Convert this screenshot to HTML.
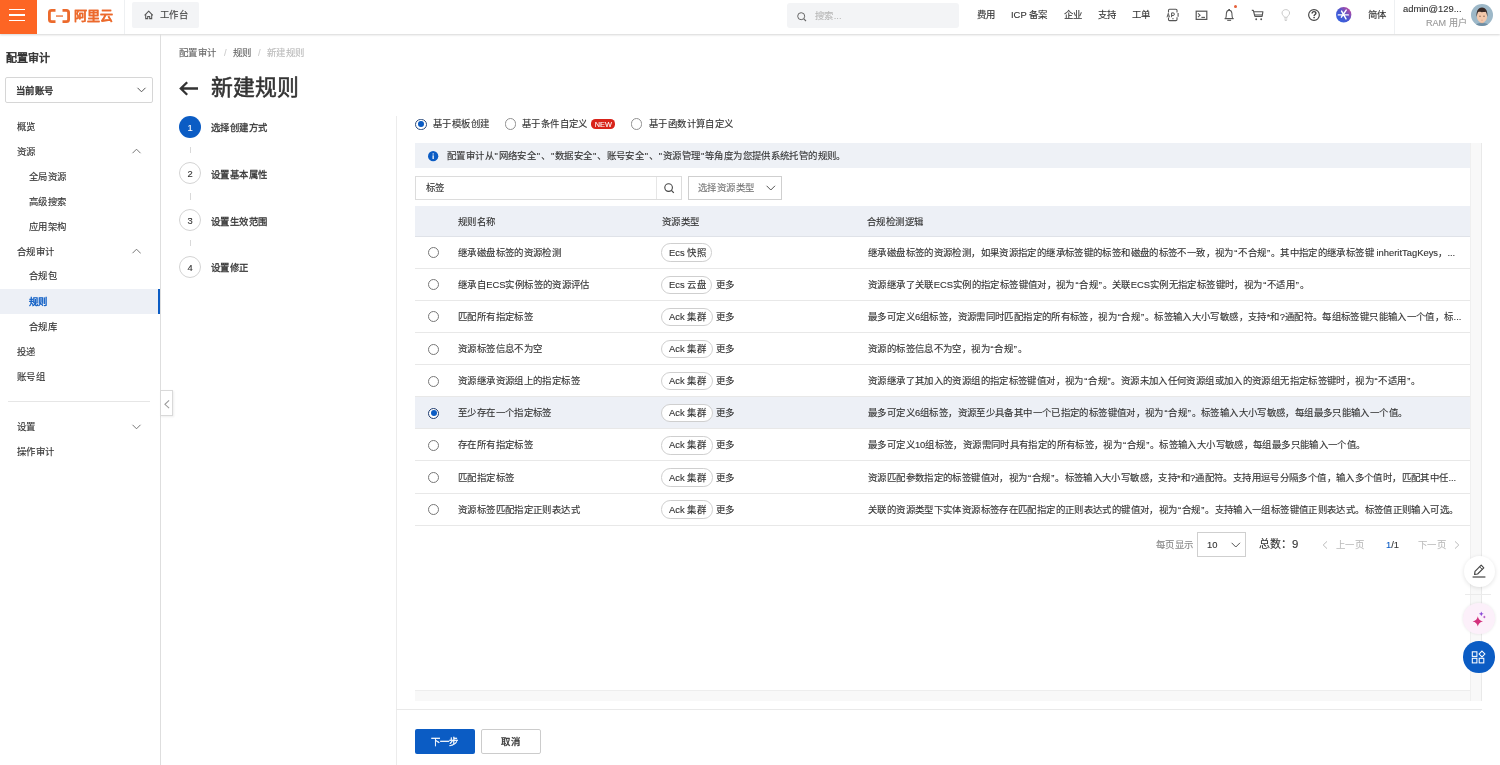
<!DOCTYPE html>
<html lang="zh-CN"><head><meta charset="utf-8">
<style>
*{box-sizing:border-box}
html,body{margin:0;padding:0;width:1500px;height:765px;overflow:hidden;background:#fff}
body{font-family:"Liberation Sans",sans-serif;font-size:9.375px;color:#333;position:relative}
#root{position:absolute;left:0;top:0;width:1500px;height:765px;will-change:transform}
.a{position:absolute}
.q{margin:0 0.9px}
.t{position:absolute;white-space:nowrap;font-size:12px;line-height:15.36px;height:15.36px;transform:scale(.78125);transform-origin:0 0;-webkit-text-stroke:0.15px}
svg{position:absolute;overflow:visible}
</style></head><body><div id="root">

<!-- ===== TOP BAR ===== -->
<div class="a" style="left:0;top:0;width:1500px;height:34px;background:#fff;box-shadow:0 1px 2px rgba(0,0,0,.16)"></div>
<div class="a" style="left:0;top:0;width:36.7px;height:33.8px;background:#fd6524"></div>
<div class="a" style="left:9.2px;top:8.5px;width:15.7px;height:1.7px;background:#fff"></div>
<div class="a" style="left:9.2px;top:14.2px;width:15.7px;height:1.7px;background:#fff"></div>
<div class="a" style="left:9.2px;top:19.5px;width:15.7px;height:1.7px;background:#fff"></div>
<!-- logo -->
<svg style="left:48px;top:9px" width="23" height="14" viewBox="0 0 23 14">
 <path d="M7.5 1.3H3.6Q1.4 1.3 1.4 3.5V10.5Q1.4 12.7 3.6 12.7H7.5" fill="none" stroke="#ec6a2c" stroke-width="2.8"/>
 <path d="M14.5 1.3H18.4Q20.6 1.3 20.6 3.5V10.5Q20.6 12.7 18.4 12.7H14.5" fill="none" stroke="#ec6a2c" stroke-width="2.8"/>
 <rect x="8" y="6.4" width="7" height="1.3" fill="#ec6a2c"/>
</svg>
<div class="t" style="left:74px;top:9.5px;font-size:16.64px;line-height:16.64px;height:16.64px;color:#ec6a2c;font-weight:bold;letter-spacing:-0.4px">阿里云</div>
<div class="a" style="left:124px;top:0;width:1px;height:34px;background:#eef0f2"></div>
<div class="a" style="left:132.2px;top:2.4px;width:66.5px;height:25.2px;background:#f3f4f6;border-radius:2px"></div>
<svg style="left:144px;top:10px" width="10" height="10" viewBox="0 0 10 10"><path d="M0.6 5.3L4.7 1.1L8.8 5.3" fill="none" stroke="#555" stroke-width="1.05" stroke-linejoin="round"/><path d="M1.7 4.3V8.6H3.7V6.4H5.7V8.6H7.7V4.3" fill="none" stroke="#555" stroke-width="1.05"/></svg>
<div class="t" style="left:159.6px;top:9px;color:#444">工作台</div>

<div class="a" style="left:787px;top:3px;width:172px;height:25px;background:#f3f4f6;border-radius:3px"></div>
<svg style="left:797px;top:11.5px" width="10" height="10" viewBox="0 0 10 10"><circle cx="4.2" cy="4.2" r="3.5" fill="none" stroke="#666" stroke-width="1"/><path d="M6.8 6.8L9 9" stroke="#666" stroke-width="1.1"/></svg>
<div class="t" style="left:815px;top:9.5px;color:#b8b8b8">搜索...</div>

<div class="t" style="left:977px;top:9px">费用</div>
<div class="t" style="left:1011px;top:9px">ICP 备案</div>
<div class="t" style="left:1063.5px;top:9px">企业</div>
<div class="t" style="left:1098px;top:9px">支持</div>
<div class="t" style="left:1132px;top:9px">工单</div>
<!-- API icon -->
<svg style="left:1166px;top:8px" width="14" height="14" viewBox="0 0 14 14">
 <path d="M2.5 4.6V2.3Q2.5 1.2 3.6 1.2H9.9Q11 1.2 11 2.3V4.4M11 9.2V11.4Q11 12.6 9.9 12.6H3.6Q2.5 12.6 2.5 11.4V9.4" fill="none" stroke="#555" stroke-width="1.1"/>
 <path d="M1 9.3L2.3 5.3L3.6 9.3M1.5 8H3.1" fill="none" stroke="#555" stroke-width="0.9"/>
 <path d="M5.6 9.2V4.9H7.1Q8.4 4.9 8.4 6.2Q8.4 7.5 7.1 7.5H5.6" fill="none" stroke="#555" stroke-width="1"/>
 <rect x="6.3" y="10.2" width="1.3" height="1" fill="#555"/>
 <path d="M12.1 5.1V8.7" stroke="#555" stroke-width="1.1"/>
</svg>
<!-- terminal -->
<svg style="left:1194.5px;top:9.5px" width="13" height="11" viewBox="0 0 13 11">
 <rect x="1.2" y="1.2" width="10.6" height="8.2" fill="none" stroke="#555" stroke-width="1.2"/>
 <path d="M3 3.3L5.1 5.2L3 7.1" fill="none" stroke="#555" stroke-width="1.05"/>
 <path d="M6.4 7.4H10" stroke="#555" stroke-width="1.1"/>
</svg>
<!-- bell -->
<svg style="left:1224px;top:8px" width="11" height="14" viewBox="0 0 11 14">
 <rect x="4.3" y="1" width="1.7" height="1.3" fill="#555"/>
 <path d="M1.6 10.5C2.4 9.4 2.2 7 2.4 5.3C2.6 3.4 3.6 2.3 5.15 2.3C6.7 2.3 7.7 3.4 7.9 5.3C8.1 7 7.9 9.4 8.7 10.5" fill="none" stroke="#555" stroke-width="1.05"/>
 <path d="M0.6 10.6H9.7" stroke="#555" stroke-width="1.2"/>
 <path d="M3.2 12.3H7.1" stroke="#555" stroke-width="1.1"/>
</svg>
<div class="a" style="left:1233.8px;top:4.7px;width:3px;height:3px;border-radius:50%;background:#e5603a"></div>
<!-- cart -->
<svg style="left:1250.5px;top:9px" width="13" height="12" viewBox="0 0 13 12">
 <path d="M0.8 1.3H2.3L3.9 7.4H11.1L11.9 2.7H3" fill="none" stroke="#555" stroke-width="1.15" stroke-linejoin="round"/>
 <path d="M3.5 5.9H11.3" stroke="#555" stroke-width="0.9"/>
 <circle cx="5.2" cy="10.2" r="0.95" fill="#555"/><circle cx="10.2" cy="10.2" r="0.95" fill="#555"/>
</svg>
<!-- bulb -->
<svg style="left:1281px;top:9px" width="10" height="12" viewBox="0 0 10 12">
 <path d="M3.3 8.3C3.3 7 1 6 1 4C1 2 2.8 0.6 4.8 0.6C6.8 0.6 8.6 2 8.6 4C8.6 6 6.3 7 6.3 8.3Z" fill="none" stroke="#c9c9c9" stroke-width="1"/>
 <path d="M3.3 10H6.3M3.8 11.4H5.8" stroke="#c9c9c9" stroke-width="1"/>
</svg>
<!-- help -->
<svg style="left:1307.5px;top:8.8px" width="12" height="12" viewBox="0 0 12 12">
 <circle cx="6" cy="6" r="5.35" fill="none" stroke="#444" stroke-width="1.15"/>
 <path d="M4.1 4.4C4.1 3.3 4.9 2.6 6 2.6C7.1 2.6 7.9 3.3 7.9 4.3C7.9 5.5 6.1 5.6 6.1 7" fill="none" stroke="#444" stroke-width="1.4"/>
 <circle cx="6.1" cy="8.5" r="0.85" fill="#444"/>
</svg>
<!-- purple ai circle -->
<svg style="left:1335.7px;top:6.5px" width="15.4" height="15.4" viewBox="0 0 16 16">
 <defs><linearGradient id="pg" x1="0.1" y1="0.9" x2="0.9" y2="0.1"><stop offset="0" stop-color="#3461e0"/><stop offset="0.5" stop-color="#4b57cf"/><stop offset="1" stop-color="#c0479d"/></linearGradient></defs>
 <circle cx="8" cy="8" r="8" fill="url(#pg)"/>
 <path d="M2.4 8.2H12.8M5.8 4.2L10.4 12.4M10.6 3.2L5.6 10.6" stroke="#fff" stroke-width="1.5" stroke-linecap="round"/>
</svg>
<div class="t" style="left:1367.5px;top:9px">简体</div>
<div class="a" style="left:1394px;top:0;width:1px;height:34px;background:#eef0f2"></div>
<div class="t" style="left:1402.5px;top:2.8px;font-size:12px;color:#333">admin@129...</div>
<div class="t" style="left:1426.3px;top:17.2px;color:#999;font-size:11.6px">RAM 用户</div>
<!-- avatar -->
<svg style="left:1471px;top:4px" width="22" height="22" viewBox="0 0 22 22">
 <defs><clipPath id="av"><circle cx="11" cy="11" r="11"/></clipPath></defs>
 <g clip-path="url(#av)">
 <rect width="22" height="22" fill="#9db8c8"/>
 <path d="M4 22.5C5 19.5 7.5 18.8 11 18.8C14.5 18.8 17 19.5 18 22.5Z" fill="#6f8ea4"/>
 <rect x="9.4" y="16.5" width="3.2" height="2.6" fill="#e3b396"/>
 <ellipse cx="11" cy="12.2" rx="5.1" ry="6.4" fill="#f3c8ab"/>
 <path d="M5.7 13C5 8 6.8 3.6 11 3.6C15.2 3.6 17 8 16.3 13C15.9 10.5 15.6 8.4 14.6 7.8C13 8.3 9 8.3 7.4 7.8C6.4 8.4 6.1 10.5 5.7 13Z" fill="#3b2a26"/>
 <ellipse cx="9" cy="12.3" rx="0.6" ry="0.7" fill="#6b4a3a"/><ellipse cx="13" cy="12.3" rx="0.6" ry="0.7" fill="#6b4a3a"/>
 <path d="M10 16.2H12" stroke="#d99a86" stroke-width="0.6"/>
 </g>
</svg>

<!-- ===== SIDEBAR ===== -->
<div class="a" style="left:160px;top:34px;width:1px;height:731px;background:#dedede"></div>
<div class="t" style="left:6px;top:53px;font-size:14px;line-height:15.36px;color:#333;-webkit-text-stroke:0.75px #333">配置审计</div>
<div class="a" style="left:5.3px;top:77.3px;width:147.3px;height:25.4px;border:1px solid #d6d6d6;border-radius:2px;background:#fff"></div>
<div class="t" style="left:16.3px;top:85.2px;color:#333;-webkit-text-stroke:0.55px #333">当前账号</div>
<svg style="left:136.5px;top:87px" width="9" height="6" viewBox="0 0 9 6"><path d="M0.5 0.8L4.5 4.8L8.5 0.8" fill="none" stroke="#555" stroke-width="1"/></svg>

<div class="t" style="left:17px;top:120.5px">概览</div>
<div class="t" style="left:16.5px;top:145.5px">资源</div>
<svg style="left:132px;top:148px" width="9" height="6" viewBox="0 0 9 6"><path d="M0.5 5.2L4.5 1.2L8.5 5.2" fill="none" stroke="#666" stroke-width="0.9"/></svg>
<div class="t" style="left:29.4px;top:170.9px">全局资源</div>
<div class="t" style="left:29.4px;top:196px">高级搜索</div>
<div class="t" style="left:29.4px;top:220.8px">应用架构</div>
<div class="t" style="left:16.5px;top:245.5px">合规审计</div>
<svg style="left:132px;top:248px" width="9" height="6" viewBox="0 0 9 6"><path d="M0.5 5.2L4.5 1.2L8.5 5.2" fill="none" stroke="#666" stroke-width="0.9"/></svg>
<div class="t" style="left:29.4px;top:270.3px">合规包</div>
<div class="a" style="left:0;top:289.2px;width:160px;height:24.6px;background:#edf0f6"></div>
<div class="a" style="left:158px;top:289.2px;width:2px;height:24.6px;background:#0b5cc4"></div>
<div class="t" style="left:29.4px;top:295.5px;color:#0b5cc4;-webkit-text-stroke:0.55px #0b5cc4">规则</div>
<div class="t" style="left:29.4px;top:321px">合规库</div>
<div class="t" style="left:16.5px;top:346px">投递</div>
<div class="t" style="left:16.5px;top:371px">账号组</div>
<div class="a" style="left:8px;top:401px;width:142px;height:1px;background:#e6e6e6"></div>
<div class="t" style="left:16.5px;top:420.7px">设置</div>
<svg style="left:132px;top:423.5px" width="9" height="6" viewBox="0 0 9 6"><path d="M0.5 0.8L4.5 4.8L8.5 0.8" fill="none" stroke="#666" stroke-width="0.9"/></svg>
<div class="t" style="left:16.5px;top:445.6px">操作审计</div>
<!-- collapse tab -->
<div class="a" style="left:160px;top:390.3px;width:12.6px;height:26.2px;background:#fff;border:1px solid #d9d9d9;box-shadow:1px 1px 2px rgba(0,0,0,.07)"></div>
<svg style="left:163.5px;top:399.8px" width="6" height="9" viewBox="0 0 6 9"><path d="M5.1 0.4L0.9 4.3L5.1 8.2" fill="none" stroke="#999" stroke-width="1.05"/></svg>

<!-- ===== MAIN HEADER ===== -->
<div class="t" style="left:179.4px;top:47.3px;color:#666">配置审计</div>
<div class="t" style="left:223.5px;top:47.3px;color:#ccc">/</div>
<div class="t" style="left:232.7px;top:47.3px;color:#666">规则</div>
<div class="t" style="left:257.7px;top:47.3px;color:#ccc">/</div>
<div class="t" style="left:266.9px;top:47.3px;color:#bbb">新建规则</div>
<svg style="left:179px;top:81px" width="20" height="15" viewBox="0 0 20 15"><path d="M19 7.5H2.2M8.2 1.2L1.8 7.5L8.2 13.8" fill="none" stroke="#333" stroke-width="2.3"/></svg>
<div class="t" style="left:210.5px;top:76px;font-size:28px;line-height:30.72px;height:30.72px;color:#333;-webkit-text-stroke:0.7px #333">新建规则</div>

<!-- steps -->
<div class="a" style="left:179.2px;top:115.7px;width:22px;height:22px;border-radius:50%;background:#0b5cc4"></div>
<div class="t" style="left:179.2px;top:121.50px;width:28.16px;text-align:center;color:#fff">1</div>
<div class="a" style="left:179.2px;top:162.3px;width:22px;height:22px;border-radius:50%;border:1px solid #d3d3d3"></div>
<div class="t" style="left:179.2px;top:168.10px;width:28.16px;text-align:center;color:#333">2</div>
<div class="a" style="left:179.2px;top:209px;width:22px;height:22px;border-radius:50%;border:1px solid #d3d3d3"></div>
<div class="t" style="left:179.2px;top:214.80px;width:28.16px;text-align:center;color:#333">3</div>
<div class="a" style="left:179.2px;top:255.7px;width:22px;height:22px;border-radius:50%;border:1px solid #d3d3d3"></div>
<div class="t" style="left:179.2px;top:261.50px;width:28.16px;text-align:center;color:#333">4</div>
<div class="a" style="left:190px;top:146.6px;width:1px;height:6.3px;background:#d9d9d9"></div>
<div class="a" style="left:190px;top:193.3px;width:1px;height:6.3px;background:#d9d9d9"></div>
<div class="a" style="left:190px;top:240px;width:1px;height:6.3px;background:#d9d9d9"></div>
<div class="t" style="left:210.8px;top:122.3px;-webkit-text-stroke:0.35px #333">选择创建方式</div>
<div class="t" style="left:210.8px;top:168.8px;-webkit-text-stroke:0.35px #333">设置基本属性</div>
<div class="t" style="left:210.8px;top:215.5px;-webkit-text-stroke:0.35px #333">设置生效范围</div>
<div class="t" style="left:210.8px;top:262.2px;-webkit-text-stroke:0.35px #333">设置修正</div>

<div class="a" style="left:395.6px;top:115.7px;width:1px;height:650px;background:#ececec"></div>

<!-- ===== CONTENT ===== -->

<!-- radios -->
<div class="a" style="left:415px;top:118.5px;width:11.6px;height:11.6px;border-radius:50%;border:1px solid #2b4a7a;background:#fff"></div>
<div class="a" style="left:417.9px;top:121.4px;width:5.8px;height:5.8px;border-radius:50%;background:#0b5cc4"></div>
<div class="t" style="left:432.7px;top:118.3px">基于模板创建</div>
<div class="a" style="left:504.5px;top:118.4px;width:11.6px;height:11.6px;border-radius:50%;border:1px solid #8f8f8f;background:#fff"></div>
<div class="t" style="left:521.7px;top:118.3px">基于条件自定义</div>
<div class="a" style="left:590.7px;top:118.6px;width:24.6px;height:10.9px;border-radius:4.5px;background:#d8231a"></div><div class="t" style="left:590.7px;top:118.6px;width:31.5px;height:14px;line-height:14.4px;text-align:center;color:#fff;font-size:9.4px;-webkit-text-stroke:0.1px #fff">NEW</div>
<div class="a" style="left:630.7px;top:118.4px;width:11.6px;height:11.6px;border-radius:50%;border:1px solid #8f8f8f;background:#fff"></div>
<div class="t" style="left:648.6px;top:118.3px">基于函数计算自定义</div>

<!-- scroll container tracks -->
<div class="a" style="left:1470px;top:142.5px;width:11.8px;height:558.3px;background:#f8f8f8;border-left:1px solid #efefef;border-right:1px solid #e9e9e9"></div>
<div class="a" style="left:415px;top:690px;width:1055px;height:10.8px;background:#f8f8f8;border-top:1px solid #ededed"></div>

<!-- info bar -->
<div class="a" style="left:415px;top:143px;width:1055px;height:25px;background:#eef1f6"></div>
<svg style="left:428px;top:150.9px" width="10.3" height="10.3" viewBox="0 0 10 10"><circle cx="5" cy="5" r="5" fill="#0b5cc4"/><rect x="4.4" y="4.2" width="1.2" height="3.6" fill="#fff"/><circle cx="5" cy="2.8" r="0.7" fill="#fff"/></svg>
<div class="t" style="left:446.5px;top:150px">配置审计从<span class="q">"</span>网络安全<span class="q">"</span>、<span class="q">"</span>数据安全<span class="q">"</span>、账号安全<span class="q">"</span>、<span class="q">"</span>资源管理<span class="q">"</span>等角度为您提供系统托管的规则。</div>

<!-- search -->
<div class="a" style="left:415px;top:175.5px;width:266.6px;height:24.2px;border:1px solid #dcdcdc;background:#fff"></div>
<div class="a" style="left:656px;top:176.5px;width:1px;height:22.2px;background:#e6e6e6"></div>
<div class="t" style="left:425.9px;top:181.5px">标签</div>
<svg style="left:663.8px;top:182.5px" width="11" height="11" viewBox="0 0 11 11"><circle cx="4.6" cy="4.6" r="3.8" fill="none" stroke="#444" stroke-width="1.1"/><path d="M7.4 7.4L9.8 9.8" stroke="#444" stroke-width="1.2"/></svg>
<div class="a" style="left:688.2px;top:175.5px;width:94.3px;height:24.2px;border:1px solid #cfcfcf;background:#fff"></div>
<div class="t" style="left:698px;top:181.5px;color:#777">选择资源类型</div>
<svg style="left:766px;top:184.5px" width="10" height="6" viewBox="0 0 10 6"><path d="M0.6 0.8L4.8 5L9 0.8" fill="none" stroke="#555" stroke-width="1"/></svg>

<!-- table header -->
<div class="a" style="left:415px;top:205.8px;width:1055px;height:31px;background:#edf0f6;border-bottom:1px solid #dfe2e8"></div>
<div class="t" style="left:457.7px;top:215.5px">规则名称</div>
<div class="t" style="left:661.7px;top:215.5px">资源类型</div>
<div class="t" style="left:867px;top:215.5px">合规检测逻辑</div>

<div class="a" style="left:415px;top:267.72px;width:1055px;height:1px;background:#e8e8e8"></div>
<div class="a" style="left:428px;top:247.16px;width:11px;height:11px;border-radius:50%;border:1px solid #777;background:#fff"></div>
<div class="t" style="left:457.7px;top:246.66px">继承磁盘标签的资源检测</div>
<div class="a" style="left:661.4px;top:243.46px;width:50.6px;height:18.4px;border:1px solid #cfcfcf;border-radius:9.2px;background:#fff"></div>
<div class="t" style="left:668.8px;top:246.66px">Ecs 快照</div>
<div class="t" style="left:867.6px;top:246.66px">继承磁盘标签的资源检测，如果资源指定的继承标签键的标签和磁盘的标签不一致，视为<span class="q">“</span>不合规<span class="q">”</span>。其中指定的继承标签键 inheritTagKeys，...</div>
<div class="a" style="left:415px;top:299.84px;width:1055px;height:1px;background:#e8e8e8"></div>
<div class="a" style="left:428px;top:279.28px;width:11px;height:11px;border-radius:50%;border:1px solid #777;background:#fff"></div>
<div class="t" style="left:457.7px;top:278.78px">继承自ECS实例标签的资源评估</div>
<div class="a" style="left:661.4px;top:275.58px;width:50.6px;height:18.4px;border:1px solid #cfcfcf;border-radius:9.2px;background:#fff"></div>
<div class="t" style="left:668.8px;top:278.78px">Ecs 云盘</div>
<div class="t" style="left:716.3px;top:278.78px">更多</div>
<div class="t" style="left:867.6px;top:278.78px">资源继承了关联ECS实例的指定标签键值对，视为<span class="q">“</span>合规<span class="q">”</span>。关联ECS实例无指定标签键时，视为<span class="q">“</span>不适用<span class="q">”</span>。</div>
<div class="a" style="left:415px;top:331.96px;width:1055px;height:1px;background:#e8e8e8"></div>
<div class="a" style="left:428px;top:311.40px;width:11px;height:11px;border-radius:50%;border:1px solid #777;background:#fff"></div>
<div class="t" style="left:457.7px;top:310.90px">匹配所有指定标签</div>
<div class="a" style="left:661.4px;top:307.70px;width:52px;height:18.4px;border:1px solid #cfcfcf;border-radius:9.2px;background:#fff"></div>
<div class="t" style="left:668.8px;top:310.90px">Ack 集群</div>
<div class="t" style="left:716.3px;top:310.90px">更多</div>
<div class="t" style="left:867.6px;top:310.90px">最多可定义6组标签，资源需同时匹配指定的所有标签，视为<span class="q">“</span>合规<span class="q">”</span>。标签输入大小写敏感，支持*和?通配符。每组标签键只能输入一个值，标...</div>
<div class="a" style="left:415px;top:364.08px;width:1055px;height:1px;background:#e8e8e8"></div>
<div class="a" style="left:428px;top:343.52px;width:11px;height:11px;border-radius:50%;border:1px solid #777;background:#fff"></div>
<div class="t" style="left:457.7px;top:343.02px">资源标签信息不为空</div>
<div class="a" style="left:661.4px;top:339.82px;width:52px;height:18.4px;border:1px solid #cfcfcf;border-radius:9.2px;background:#fff"></div>
<div class="t" style="left:668.8px;top:343.02px">Ack 集群</div>
<div class="t" style="left:716.3px;top:343.02px">更多</div>
<div class="t" style="left:867.6px;top:343.02px">资源的标签信息不为空，视为<span class="q">“</span>合规<span class="q">”</span>。</div>
<div class="a" style="left:415px;top:396.20px;width:1055px;height:1px;background:#e8e8e8"></div>
<div class="a" style="left:428px;top:375.64px;width:11px;height:11px;border-radius:50%;border:1px solid #777;background:#fff"></div>
<div class="t" style="left:457.7px;top:375.14px">资源继承资源组上的指定标签</div>
<div class="a" style="left:661.4px;top:371.94px;width:52px;height:18.4px;border:1px solid #cfcfcf;border-radius:9.2px;background:#fff"></div>
<div class="t" style="left:668.8px;top:375.14px">Ack 集群</div>
<div class="t" style="left:716.3px;top:375.14px">更多</div>
<div class="t" style="left:867.6px;top:375.14px">资源继承了其加入的资源组的指定标签键值对，视为<span class="q">“</span>合规<span class="q">”</span>。资源未加入任何资源组或加入的资源组无指定标签键时，视为<span class="q">“</span>不适用<span class="q">”</span>。</div>
<div class="a" style="left:415px;top:396.80px;width:1055px;height:32.52px;background:#edf0f6"></div>
<div class="a" style="left:415px;top:428.32px;width:1055px;height:1px;background:#e8e8e8"></div>
<div class="a" style="left:428px;top:407.76px;width:11px;height:11px;border-radius:50%;border:1px solid #1f3b6e;background:#fff"></div>
<div class="a" style="left:430.5px;top:410.26px;width:6px;height:6px;border-radius:50%;background:#0b5cc4"></div>
<div class="t" style="left:457.7px;top:407.26px">至少存在一个指定标签</div>
<div class="a" style="left:661.4px;top:404.06px;width:52px;height:18.4px;border:1px solid #cfcfcf;border-radius:9.2px;background:#fff"></div>
<div class="t" style="left:668.8px;top:407.26px">Ack 集群</div>
<div class="t" style="left:716.3px;top:407.26px">更多</div>
<div class="t" style="left:867.6px;top:407.26px">最多可定义6组标签，资源至少具备其中一个已指定的标签键值对，视为<span class="q">“</span>合规<span class="q">”</span>。标签输入大小写敏感，每组最多只能输入一个值。</div>
<div class="a" style="left:415px;top:460.44px;width:1055px;height:1px;background:#e8e8e8"></div>
<div class="a" style="left:428px;top:439.88px;width:11px;height:11px;border-radius:50%;border:1px solid #777;background:#fff"></div>
<div class="t" style="left:457.7px;top:439.38px">存在所有指定标签</div>
<div class="a" style="left:661.4px;top:436.18px;width:52px;height:18.4px;border:1px solid #cfcfcf;border-radius:9.2px;background:#fff"></div>
<div class="t" style="left:668.8px;top:439.38px">Ack 集群</div>
<div class="t" style="left:716.3px;top:439.38px">更多</div>
<div class="t" style="left:867.6px;top:439.38px">最多可定义10组标签，资源需同时具有指定的所有标签，视为<span class="q">“</span>合规<span class="q">”</span>。标签输入大小写敏感，每组最多只能输入一个值。</div>
<div class="a" style="left:415px;top:492.56px;width:1055px;height:1px;background:#e8e8e8"></div>
<div class="a" style="left:428px;top:472.00px;width:11px;height:11px;border-radius:50%;border:1px solid #777;background:#fff"></div>
<div class="t" style="left:457.7px;top:471.50px">匹配指定标签</div>
<div class="a" style="left:661.4px;top:468.30px;width:52px;height:18.4px;border:1px solid #cfcfcf;border-radius:9.2px;background:#fff"></div>
<div class="t" style="left:668.8px;top:471.50px">Ack 集群</div>
<div class="t" style="left:716.3px;top:471.50px">更多</div>
<div class="t" style="left:867.6px;top:471.50px">资源匹配参数指定的标签键值对，视为<span class="q">“</span>合规<span class="q">”</span>。标签输入大小写敏感，支持*和?通配符。支持用逗号分隔多个值，输入多个值时，匹配其中任...</div>
<div class="a" style="left:415px;top:524.68px;width:1055px;height:1px;background:#e8e8e8"></div>
<div class="a" style="left:428px;top:504.12px;width:11px;height:11px;border-radius:50%;border:1px solid #777;background:#fff"></div>
<div class="t" style="left:457.7px;top:503.62px">资源标签匹配指定正则表达式</div>
<div class="a" style="left:661.4px;top:500.42px;width:52px;height:18.4px;border:1px solid #cfcfcf;border-radius:9.2px;background:#fff"></div>
<div class="t" style="left:668.8px;top:503.62px">Ack 集群</div>
<div class="t" style="left:716.3px;top:503.62px">更多</div>
<div class="t" style="left:867.6px;top:503.62px">关联的资源类型下实体资源标签存在匹配指定的正则表达式的键值对，视为<span class="q">“</span>合规<span class="q">”</span>。支持输入一组标签键值正则表达式。标签值正则输入可选。</div>

<!-- pagination -->
<div class="t" style="left:1155.9px;top:538.5px;color:#888">每页显示</div>
<div class="a" style="left:1196.7px;top:532.3px;width:49.8px;height:24.9px;border:1px solid #cfcfcf;background:#fff"></div>
<div class="t" style="left:1206.9px;top:538.5px">10</div>
<svg style="left:1230.5px;top:541.5px" width="10" height="6" viewBox="0 0 10 6"><path d="M0.6 0.8L4.8 5L9 0.8" fill="none" stroke="#555" stroke-width="1"/></svg>
<div class="t" style="left:1259.2px;top:537.5px;font-size:14px;line-height:17.92px;height:17.92px">总数：</div>
<div class="t" style="left:1292.3px;top:537.5px;font-size:14.5px;line-height:17.92px;height:17.92px">9</div>
<svg style="left:1322.3px;top:540.5px" width="6" height="8" viewBox="0 0 6 8"><path d="M5 0.4L1.2 4L5 7.6" fill="none" stroke="#bbb" stroke-width="1"/></svg>
<div class="t" style="left:1336px;top:538.5px;color:#bbb">上一页</div>
<div class="t" style="left:1385.9px;top:538.5px"><span style="color:#0b5cc4">1</span>/1</div>
<div class="t" style="left:1418.3px;top:538.5px;color:#bbb">下一页</div>
<svg style="left:1454px;top:540.5px" width="6" height="8" viewBox="0 0 6 8"><path d="M1 0.4L4.8 4L1 7.6" fill="none" stroke="#bbb" stroke-width="1"/></svg>

<!-- footer -->
<div class="a" style="left:396px;top:709px;width:1086px;height:1px;background:#e9e9e9"></div>
<div class="a" style="left:415.2px;top:729px;width:59.6px;height:24.8px;background:#0b5cc4;border-radius:2px"></div>
<div class="t" style="left:415.2px;top:736.2px;width:76.3px;text-align:center;color:#fff;-webkit-text-stroke:0.4px #fff">下一步</div>
<div class="a" style="left:481.3px;top:729px;width:59.3px;height:24.8px;background:#fff;border:1px solid #cccccc;border-radius:2px"></div>
<div class="t" style="left:481.3px;top:736.2px;width:75.9px;text-align:center;color:#333;-webkit-text-stroke:0.4px #333">取消</div>

<!-- floating buttons -->
<div class="a" style="left:1463.5px;top:555.5px;width:31px;height:31px;border-radius:50%;background:#fff;box-shadow:0 1px 4px rgba(0,0,0,.12)"></div>
<svg style="left:1471px;top:562.5px" width="16" height="16" viewBox="0 0 16 16"><path d="M3.6 11.4L4 8.4L10.2 2.2L12.8 4.8L6.6 11Z" fill="none" stroke="#444" stroke-width="1.15" stroke-linejoin="round"/><path d="M8.6 3.8L11.2 6.4" stroke="#444" stroke-width="1"/><path d="M1.6 14H14.4" stroke="#444" stroke-width="1.2"/></svg>
<div class="a" style="left:1465px;top:593.5px;width:26px;height:1px;background:#ebebeb"></div>
<div class="a" style="left:1463.3px;top:602.8px;width:31.5px;height:31.5px;border-radius:50%;background:#fcf0fa;box-shadow:0 0 3px rgba(0,0,0,.10)"></div>
<svg style="left:1470px;top:608px" width="16" height="20" viewBox="0 0 16 20"><path d="M7.8 8.2Q8.5 12.7 13 13.4Q8.5 14.1 7.8 18.6Q7.1 14.1 2.6 13.4Q7.1 12.7 7.8 8.2Z" fill="#d3307c"/><path d="M11.3 3.4Q11.6 5.5 13.7 5.8Q11.6 6.1 11.3 8.2Q11 6.1 8.9 5.8Q11 5.5 11.3 3.4Z" fill="#8a4ad8"/><path d="M14.3 7.4Q14.5 8.8 15.9 9Q14.5 9.2 14.3 10.6Q14.1 9.2 12.7 9Q14.1 8.8 14.3 7.4Z" fill="#b048c0"/></svg>
<div class="a" style="left:1463px;top:641.2px;width:31.5px;height:31.5px;border-radius:50%;background:#0b5cc4"></div>
<svg style="left:1470px;top:648px" width="18" height="18" viewBox="0 0 18 18"><g fill="none" stroke="#fff" stroke-width="1.05"><rect x="2.3" y="3.8" width="4.6" height="4.6"/><rect x="2.3" y="10.3" width="4.6" height="4.6"/><rect x="9.2" y="10.3" width="4.6" height="4.6"/><path d="M12 3.1L14.9 6L12 8.9L9.1 6Z"/></g></svg>


</div></body></html>
